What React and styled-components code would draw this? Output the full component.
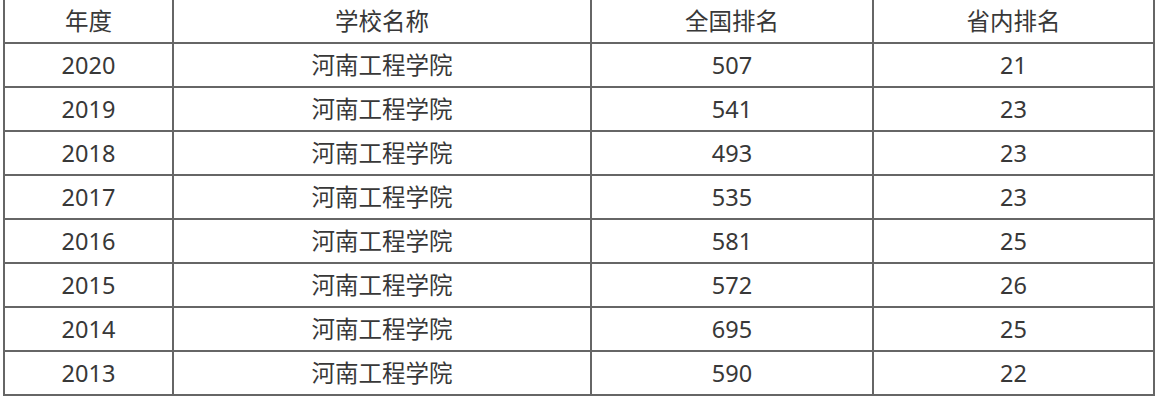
import React from "react";
import styled, { createGlobalStyle } from "styled-components";

const Global = createGlobalStyle`
  html, body { margin: 0; padding: 0; background: #fff; }
  body { overflow: hidden; }
`;

const Page = styled.div`
  padding: 0 0 0 3px;
  margin-top: -2px;
`;

const Table = styled.table`
  border-collapse: collapse;
  table-layout: fixed;
  width: 1150px;
  font-family: "Noto Sans", "Noto Sans CJK SC", sans-serif;
  font-size: 23.5px;
  color: #383838;
`;

const Cell = styled.td`
  border: 2px solid #666;
  height: 42px;
  padding: 0;
  text-align: center;
  vertical-align: middle;
  line-height: 42px;
  font-weight: 400;
`;

const HeadCell = styled(Cell).attrs({ as: "th" })`
  font-weight: 400;
`;

const cols = [169, 418, 282, 281];

const rows = [
  ["2020", "507", "21"],
  ["2019", "541", "23"],
  ["2018", "493", "23"],
  ["2017", "535", "23"],
  ["2016", "581", "25"],
  ["2015", "572", "26"],
  ["2014", "695", "25"],
  ["2013", "590", "22"],
];

export default function App() {
  return (
    <>
      <Global />
      <Page>
        <Table>
          <colgroup>
            {cols.map((w, i) => (
              <col key={i} style={{ width: w }} />
            ))}
          </colgroup>
          <thead>
            <tr>
              <HeadCell>年度</HeadCell>
              <HeadCell>学校名称</HeadCell>
              <HeadCell>全国排名</HeadCell>
              <HeadCell>省内排名</HeadCell>
            </tr>
          </thead>
          <tbody>
            {rows.map(([y, n, p]) => (
              <tr key={y}>
                <Cell>{y}</Cell>
                <Cell>河南工程学院</Cell>
                <Cell>{n}</Cell>
                <Cell>{p}</Cell>
              </tr>
            ))}
          </tbody>
        </Table>
      </Page>
    </>
  );
}
